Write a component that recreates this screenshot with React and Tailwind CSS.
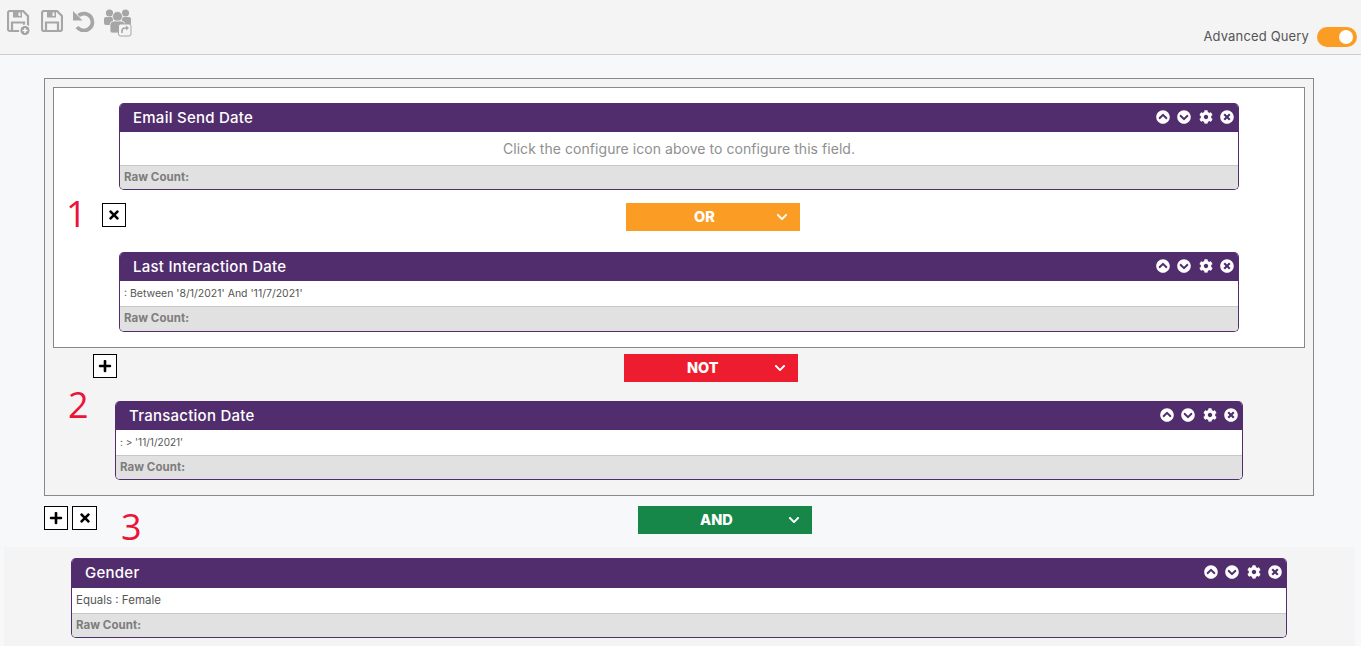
import React from 'react';
import { FaPlus, FaTimes, FaCog, FaChevronCircleUp, FaChevronCircleDown, FaTimesCircle, FaChevronDown } from 'react-icons/fa';

function FloppyPaths() {
  return (
    <>
      <path d="M3 1h13l5 5v13a2 2 0 0 1-2 2H3a2 2 0 0 1-2-2V3a2 2 0 0 1 2-2z" fill="none" stroke="#a6a6a6" strokeWidth="2.2" />
      <path d="M6 1h9v6.5H6z" fill="#a6a6a6" />
      <path d="M11.5 2.5h2v3.5h-2z" fill="#f4f4f4" />
      <path d="M5 20.5V12.5h12v8" fill="none" stroke="#a6a6a6" strokeWidth="2.2" />
    </>
  );
}

function SaveNewIcon() {
  return (
    <svg width="26" height="28" viewBox="0 0 26 28" className="block">
      <FloppyPaths />
      <circle cx="18" cy="20.5" r="6" fill="#f4f4f4" />
      <circle cx="18" cy="20.5" r="4.5" fill="#a0a0a0" />
      <path d="M15.5 20.5h5M18 18v5" stroke="#ffffff" strokeWidth="1.4" />
    </svg>
  );
}

function SaveIcon() {
  return (
    <svg width="22" height="22" viewBox="0 0 22 22" className="block">
      <FloppyPaths />
    </svg>
  );
}

function UndoIcon() {
  return (
    <svg width="23" height="22" viewBox="0 0 23 22" className="block">
      <path d="M6.5 5.5A8.5 8.5 0 1 1 5 17" fill="none" stroke="#a6a6a6" strokeWidth="3.8" />
      <path d="M1 1v9.5h9.5z" fill="#a6a6a6" />
    </svg>
  );
}

function TeamShareIcon() {
  return (
    <svg width="28" height="29" viewBox="0 0 28 29" className="block">
      <circle cx="5.5" cy="5" r="3.6" fill="#a6a6a6" />
      <circle cx="21.5" cy="5" r="3.6" fill="#a6a6a6" />
      <path d="M0 11a2 2 0 0 1 2-2h7v8H2a2 2 0 0 1-2-2zM18 9h7a2 2 0 0 1 2 2v4a2 2 0 0 1-2 2h-7z" fill="#a6a6a6" />
      <circle cx="13.5" cy="8.5" r="5" fill="#a6a6a6" stroke="#f4f4f4" strokeWidth="0.8" />
      <path d="M6 17a4 4 0 0 1 4-4h7a4 4 0 0 1 4 4v6a2 2 0 0 1-2 2H8a2 2 0 0 1-2-2z" fill="#a6a6a6" stroke="#f4f4f4" strokeWidth="0.8" />
      <rect x="14.5" y="16" width="12.5" height="12" rx="2" fill="#f4f4f4" stroke="#a6a6a6" />
      <path d="M18 25v-2a3 3 0 0 1 3-3h2" fill="none" stroke="#a6a6a6" strokeWidth="1.6" />
      <path d="M22 17.5l3 2.5-3 2.5z" fill="#a6a6a6" />
    </svg>
  );
}

function FieldCard({ title, widthClass, children, big, textClass = 'text-[10.5px]', headerClass = 'h-[29px]', footerClass = 'h-[24px]' }) {
  return (
    <div className={`${widthClass} rounded-[5px] border border-t-0 border-[#522d6d] bg-white overflow-hidden`}>
      <div className={`${headerClass} bg-[#522d6d] flex items-center justify-between pl-[14px] pr-[5px] -mx-px`}>
        <span className="text-[15px] font-medium text-white tracking-[0.25px] pt-[1px]">{title}</span>
        <div className="flex items-center gap-[7.5px] text-white text-[14px] pb-[2px]">
          <FaChevronCircleUp />
          <FaChevronCircleDown />
          <FaCog />
          <FaTimesCircle />
        </div>
      </div>
      {big ? (
        <div className="h-[33px] flex items-center justify-center text-[14px] tracking-[0.05px] text-[#8f8f8f]">{children}</div>
      ) : (
        <div className={`h-[25px] flex items-center pl-[4px] ${textClass} text-[#555555]`}>{children}</div>
      )}
      <div className={`${footerClass} bg-[#e1e1e1] border-t border-[#c8c8c8] flex items-center pl-[4px] text-[11.5px] tracking-[0.05px] font-bold text-[#7d7d7d]`}>
        Raw Count:
      </div>
    </div>
  );
}

function LogicDropdown({ label, colorClass, textClass, marginClass }) {
  return (
    <div className={`${marginClass} ${colorClass} w-[174px] h-[28px] relative flex items-center text-white text-[14.5px] font-extrabold`}>
      <span className={textClass}>{label}</span>
      <FaChevronDown className="absolute right-[12px] top-[8px] text-[12px]" />
    </div>
  );
}

function SquareButton({ children, widthClass = 'w-[24px]' }) {
  return (
    <div className={`${widthClass} h-[24px] border border-black bg-white flex items-center justify-center text-black text-[14px]`}>
      {children}
    </div>
  );
}

function Annotation({ children, posClass }) {
  return <span className={`absolute ${posClass} text-[36px] leading-none text-[#ec1238] font-['Open_Sans',sans-serif] font-normal`}>{children}</span>;
}

export default function App() {
  return (
    <div className="h-[646px] overflow-hidden bg-[#f7f8fa] font-['Inter',sans-serif]">
      {/* Toolbar */}
      <div className="h-[55px] bg-[#f4f4f4] border-b border-[#cccccc] flex justify-between">
        <div className="flex items-start pl-[7px] pt-[8px]">
          <div className="w-[34px] pt-[2px]"><SaveNewIcon /></div>
          <div className="pt-[2px]"><SaveIcon /></div>
          <div className="pt-[2px] ml-[9px]"><UndoIcon /></div>
          <div className="ml-[9px]"><TeamShareIcon /></div>
        </div>
        <div className="flex items-start pt-[27px] pr-[4px]">
          <span className="text-[13px] leading-[18px] tracking-[0.15px] text-[#555555] mr-[8px]">Advanced Query</span>
          <div className="w-[40px] h-[20px] rounded-full bg-[#fb9c24] flex items-center justify-end pr-[4px]">
            <div className="w-[14px] h-[14px] rounded-full bg-white"></div>
          </div>
        </div>
      </div>

      {/* Outer group */}
      <div className="relative mt-[23px] ml-[44px] w-[1270px] border border-[#888888] bg-[#f4f4f4] pt-[8px] pb-[15px]">
        {/* Inner group */}
        <div className="mx-[8px] border border-[#888888] bg-white pt-[15px] pb-[15px] flex flex-col">
          <div className="ml-[65px]">
            <FieldCard title="Email Send Date" widthClass="w-[1120px]" big>
              Click the configure icon above to configure this field.
            </FieldCard>
          </div>
          <div className="relative flex items-start pl-[48px] pt-[13px] pb-[21px]">
            <Annotation posClass="left-[12px] top-[6px]">1</Annotation>
            <SquareButton><FaTimes /></SquareButton>
            <LogicDropdown label="OR" colorClass="bg-[#fb9c24]" textClass="ml-[68px]" marginClass="ml-[500px]" />
          </div>
          <div className="ml-[65px]">
            <FieldCard title="Last Interaction Date" widthClass="w-[1120px]" footerClass="h-[25px]">
              : Between '8/1/2021' And '11/7/2021'
            </FieldCard>
          </div>
        </div>

        <div className="flex items-start pl-[48px] pt-[6px]">
          <SquareButton><FaPlus /></SquareButton>
          <LogicDropdown label="NOT" colorClass="bg-[#ed1c2e]" textClass="ml-[63px]" marginClass="ml-[507px]" />
        </div>
        <Annotation posClass="left-[23px] top-[308px]">2</Annotation>
        <div className="ml-[70px] mt-[19px]">
          <FieldCard title="Transaction Date" widthClass="w-[1128px]" textClass="text-[10px]">
            : &gt; '11/1/2021'
          </FieldCard>
        </div>
      </div>

      {/* AND row */}
      <div className="relative flex items-start pl-[44px] mt-[10px]">
        <SquareButton><FaPlus /></SquareButton>
        <div className="ml-[4px]">
          <SquareButton widthClass="w-[25px]"><FaTimes /></SquareButton>
        </div>
        <Annotation posClass="left-[121px] top-[3px]">3</Annotation>
        <LogicDropdown label="AND" colorClass="bg-[#168749]" textClass="ml-[62px]" marginClass="ml-[541px]" />
      </div>

      {/* Last field */}
      <div className="mt-[13px] ml-[4px] w-[1351px] bg-[#f4f4f4] pt-[11px] pl-[67px] h-[110px]">
        <FieldCard title="Gender" widthClass="w-[1216px]" textClass="text-[11.5px]" headerClass="h-[30px]">
          Equals : Female
        </FieldCard>
      </div>
    </div>
  );
}
